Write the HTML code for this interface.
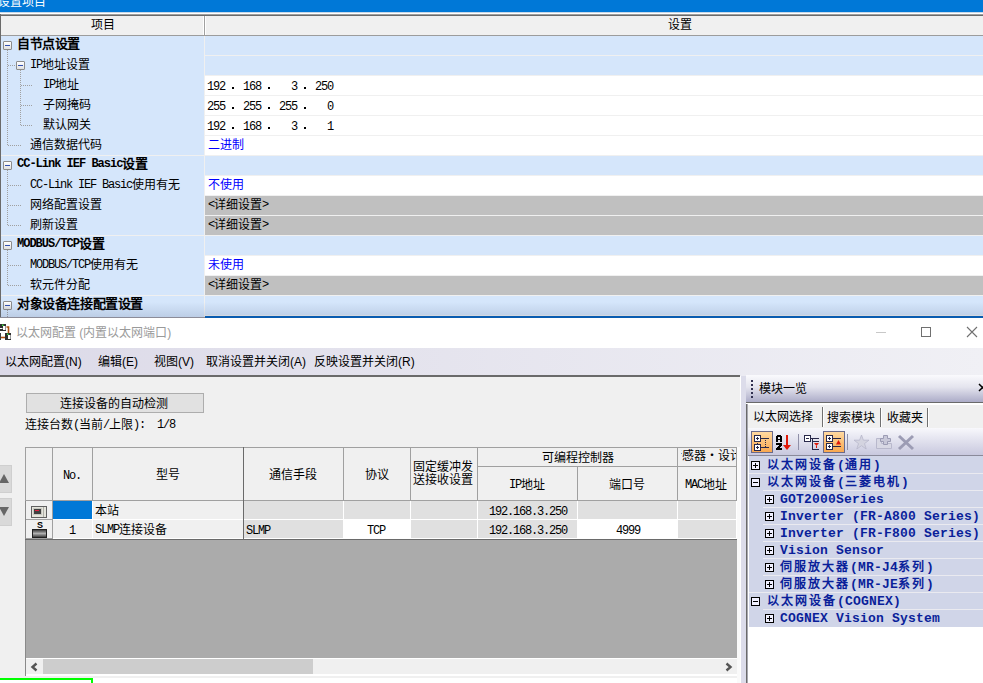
<!DOCTYPE html><html lang="zh-CN"><head><meta charset="utf-8"><style>
*{margin:0;padding:0;box-sizing:border-box}
html,body{width:983px;height:683px;overflow:hidden;background:#fff;font-family:"Liberation Sans",sans-serif;font-size:12px;color:#000}
.ab{position:absolute}
.t{position:absolute;white-space:pre;line-height:14px}
.m{font-family:"Liberation Mono",monospace;font-size:12px;letter-spacing:-1.2px}
.mb2{font-family:"Liberation Mono",monospace;font-size:12px;letter-spacing:-1.0px;position:relative;top:-1px}
.mt{font-family:"Liberation Mono",monospace;font-size:13px;letter-spacing:0.2px}
.b{font-weight:bold}
.c{font-size:12px;position:relative;top:1px}
.cb{font-size:13px;letter-spacing:-0.4px;font-weight:900}
.ct{font-size:12px;letter-spacing:2px;font-weight:900}
.dotv{position:absolute;width:1px;background:repeating-linear-gradient(to bottom,#a0a0a0 0 1px,transparent 1px 2px)}
.doth{position:absolute;height:1px;background:repeating-linear-gradient(to right,#a0a0a0 0 1px,transparent 1px 2px)}
.mb{position:absolute;width:9px;height:9px;border:1px solid #8c8c8c;border-radius:1px;background:linear-gradient(#fff,#e0e0e0)}
.mb:after{content:"";position:absolute;left:1px;top:3px;width:5px;height:1px;background:#3050b0}
</style></head><body>
<div class="ab" style="left:0;top:0;width:983px;height:12px;background:#0078d7"></div>
<div class="t" style="left:-2px;top:-5px;color:#fff;font-size:12px">设置项目</div>
<div class="ab" style="left:0;top:12px;width:983px;height:1px;background:#c8d8e8"></div>
<div class="ab" style="left:0;top:13px;width:983px;height:1px;background:#ffffff"></div>
<div class="ab" style="left:0;top:14px;width:983px;height:1px;background:#a0a0a0"></div>
<div class="ab" style="left:0;top:15px;width:983px;height:1px;background:#6a6a6a"></div>
<div class="ab" style="left:0;top:16px;width:983px;height:20px;background:#f0f0f0;border-bottom:1px solid #9c9c9c"></div>
<div class="ab" style="left:0;top:14px;width:1px;height:304px;background:#6a6a6a"></div>
<div class="ab" style="left:203px;top:16px;width:3px;height:19px;background:#a0a0a0;border-left:1px solid #fff;border-right:1px solid #fff"></div>
<div class="t" style="left:91px;top:17px"><span class="c">项目</span></div>
<div class="t" style="left:668px;top:17px"><span class="c">设置</span></div>
<div class="ab" style="left:1px;top:36px;width:203px;height:281px;background:#d5e6fb"></div>
<div class="ab" style="left:205px;top:36px;width:778px;height:19px;background:#d5e6fb"></div>
<div class="ab" style="left:205px;top:55px;width:778px;height:1px;background:#f0f0f0"></div>
<div class="t b" style="left:17px;top:37px"><span class="cb">自节点设置</span></div>
<div class="mb" style="left:3px;top:41px"></div>
<div class="ab" style="left:205px;top:56px;width:778px;height:19px;background:#d5e6fb"></div>
<div class="ab" style="left:205px;top:75px;width:778px;height:1px;background:#f0f0f0"></div>
<div class="t" style="left:30px;top:57px"><span class="m">IP</span><span class="c">地址设置</span></div>
<div class="mb" style="left:16px;top:61px"></div>
<div class="ab" style="left:205px;top:76px;width:778px;height:19px;background:#ffffff"></div>
<div class="ab" style="left:205px;top:95px;width:778px;height:1px;background:#f0f0f0"></div>
<div class="t" style="left:43px;top:77px"><span class="m">IP</span><span class="c">地址</span></div>
<div class="t m" style="left:195px;top:80px;width:30px;text-align:right">192</div>
<div class="ab" style="left:232px;top:87px;width:2px;height:2px;background:#000"></div>
<div class="t m" style="left:231px;top:80px;width:30px;text-align:right">168</div>
<div class="ab" style="left:268px;top:87px;width:2px;height:2px;background:#000"></div>
<div class="t m" style="left:267px;top:80px;width:30px;text-align:right">3</div>
<div class="ab" style="left:304px;top:87px;width:2px;height:2px;background:#000"></div>
<div class="t m" style="left:303px;top:80px;width:30px;text-align:right">250</div>
<div class="ab" style="left:205px;top:96px;width:778px;height:19px;background:#ffffff"></div>
<div class="ab" style="left:205px;top:115px;width:778px;height:1px;background:#f0f0f0"></div>
<div class="t" style="left:43px;top:97px"><span class="c">子网掩码</span></div>
<div class="t m" style="left:195px;top:100px;width:30px;text-align:right">255</div>
<div class="ab" style="left:232px;top:107px;width:2px;height:2px;background:#000"></div>
<div class="t m" style="left:231px;top:100px;width:30px;text-align:right">255</div>
<div class="ab" style="left:268px;top:107px;width:2px;height:2px;background:#000"></div>
<div class="t m" style="left:267px;top:100px;width:30px;text-align:right">255</div>
<div class="ab" style="left:304px;top:107px;width:2px;height:2px;background:#000"></div>
<div class="t m" style="left:303px;top:100px;width:30px;text-align:right">0</div>
<div class="ab" style="left:205px;top:116px;width:778px;height:19px;background:#ffffff"></div>
<div class="ab" style="left:205px;top:135px;width:778px;height:1px;background:#f0f0f0"></div>
<div class="t" style="left:43px;top:117px"><span class="c">默认网关</span></div>
<div class="t m" style="left:195px;top:120px;width:30px;text-align:right">192</div>
<div class="ab" style="left:232px;top:127px;width:2px;height:2px;background:#000"></div>
<div class="t m" style="left:231px;top:120px;width:30px;text-align:right">168</div>
<div class="ab" style="left:268px;top:127px;width:2px;height:2px;background:#000"></div>
<div class="t m" style="left:267px;top:120px;width:30px;text-align:right">3</div>
<div class="ab" style="left:304px;top:127px;width:2px;height:2px;background:#000"></div>
<div class="t m" style="left:303px;top:120px;width:30px;text-align:right">1</div>
<div class="ab" style="left:205px;top:136px;width:778px;height:19px;background:#ffffff"></div>
<div class="ab" style="left:205px;top:155px;width:778px;height:1px;background:#f0f0f0"></div>
<div class="t" style="left:30px;top:137px"><span class="c">通信数据代码</span></div>
<div class="t" style="left:208px;top:137px;color:#0000ff"><span class="c">二进制</span></div>
<div class="ab" style="left:205px;top:156px;width:778px;height:19px;background:#d5e6fb"></div>
<div class="ab" style="left:205px;top:175px;width:778px;height:1px;background:#f0f0f0"></div>
<div class="ab" style="left:1px;top:155px;width:203px;height:1px;background:#f0f0f0"></div>
<div class="t b" style="left:17px;top:157px"><span class="mb2 b">CC-Link IEF Basic</span><span class="cb">设置</span></div>
<div class="mb" style="left:3px;top:161px"></div>
<div class="ab" style="left:205px;top:176px;width:778px;height:19px;background:#ffffff"></div>
<div class="ab" style="left:205px;top:195px;width:778px;height:1px;background:#f0f0f0"></div>
<div class="t" style="left:30px;top:177px"><span class="m">CC-Link IEF Basic</span><span class="c">使用有无</span></div>
<div class="t" style="left:208px;top:177px;color:#0000ff"><span class="c">不使用</span></div>
<div class="ab" style="left:205px;top:196px;width:778px;height:19px;background:#c0c0c0"></div>
<div class="ab" style="left:205px;top:215px;width:778px;height:1px;background:#f0f0f0"></div>
<div class="t" style="left:30px;top:197px"><span class="c">网络配置设置</span></div>
<div class="t" style="left:208px;top:197px;color:#000"><span class="m">&lt;</span><span class="c">详细设置</span><span class="m">&gt;</span></div>
<div class="ab" style="left:205px;top:216px;width:778px;height:19px;background:#c0c0c0"></div>
<div class="ab" style="left:205px;top:235px;width:778px;height:1px;background:#f0f0f0"></div>
<div class="t" style="left:30px;top:217px"><span class="c">刷新设置</span></div>
<div class="t" style="left:208px;top:217px;color:#000"><span class="m">&lt;</span><span class="c">详细设置</span><span class="m">&gt;</span></div>
<div class="ab" style="left:205px;top:236px;width:778px;height:19px;background:#d5e6fb"></div>
<div class="ab" style="left:205px;top:255px;width:778px;height:1px;background:#f0f0f0"></div>
<div class="ab" style="left:1px;top:235px;width:203px;height:1px;background:#f0f0f0"></div>
<div class="t b" style="left:17px;top:237px"><span class="mb2 b">MODBUS/TCP</span><span class="cb">设置</span></div>
<div class="mb" style="left:3px;top:241px"></div>
<div class="ab" style="left:205px;top:256px;width:778px;height:19px;background:#ffffff"></div>
<div class="ab" style="left:205px;top:275px;width:778px;height:1px;background:#f0f0f0"></div>
<div class="t" style="left:30px;top:257px"><span class="m">MODBUS/TCP</span><span class="c">使用有无</span></div>
<div class="t" style="left:208px;top:257px;color:#0000ff"><span class="c">未使用</span></div>
<div class="ab" style="left:205px;top:276px;width:778px;height:19px;background:#c0c0c0"></div>
<div class="ab" style="left:205px;top:295px;width:778px;height:1px;background:#f0f0f0"></div>
<div class="t" style="left:30px;top:277px"><span class="c">软元件分配</span></div>
<div class="t" style="left:208px;top:277px;color:#000"><span class="m">&lt;</span><span class="c">详细设置</span><span class="m">&gt;</span></div>
<div class="ab" style="left:205px;top:296px;width:778px;height:19px;background:#d5e6fb"></div>
<div class="ab" style="left:205px;top:315px;width:778px;height:1px;background:#f0f0f0"></div>
<div class="ab" style="left:1px;top:295px;width:203px;height:1px;background:#f0f0f0"></div>
<div class="t b" style="left:17px;top:297px"><span class="cb">对象设备连接配置设置</span></div>
<div class="mb" style="left:3px;top:301px"></div>
<div class="ab" style="left:204px;top:36px;width:1px;height:281px;background:#f0f0f0"></div>
<div class="dotv" style="left:7px;top:50px;height:96px"></div>
<div class="doth" style="left:8px;top:65px;width:8px"></div>
<div class="doth" style="left:8px;top:145px;width:13px"></div>
<div class="dotv" style="left:20px;top:70px;height:56px"></div>
<div class="doth" style="left:21px;top:85px;width:12px"></div>
<div class="doth" style="left:21px;top:105px;width:12px"></div>
<div class="doth" style="left:21px;top:125px;width:12px"></div>
<div class="dotv" style="left:7px;top:170px;height:56px"></div>
<div class="doth" style="left:8px;top:185px;width:13px"></div>
<div class="doth" style="left:8px;top:205px;width:13px"></div>
<div class="doth" style="left:8px;top:225px;width:13px"></div>
<div class="dotv" style="left:7px;top:250px;height:36px"></div>
<div class="doth" style="left:8px;top:265px;width:13px"></div>
<div class="doth" style="left:8px;top:285px;width:13px"></div>
<div class="dotv" style="left:7px;top:310px;height:8px"></div>
<div class="ab" style="left:0;top:302px;width:983px;height:15px;background:linear-gradient(rgba(60,80,120,0),rgba(60,80,120,0.16))"></div>
<div class="ab" style="left:0;top:317px;width:205px;height:1px;background:#8c8c98"></div>
<div class="ab" style="left:205px;top:316px;width:778px;height:2px;background:#0a5cb0"></div>
<div class="ab" style="left:0;top:318px;width:983px;height:30px;background:#fff"></div>
<div class="t" style="left:16px;top:326px;color:#9a9a9a;font-size:12px">以太网配置 (内置以太网端口)</div>
<svg class="ab" style="left:0;top:323px" width="12" height="18" viewBox="0 0 12 18">
<path d="M6.5 4H8.5V11" stroke="#b05010" stroke-width="1.6" fill="none"/>
<path d="M1 14.5H5.5" stroke="#b05010" stroke-width="1.6" fill="none"/>
<rect x="0" y="1" width="6" height="7" fill="#303030"/><rect x="3" y="3" width="2.5" height="4" fill="#fff"/><rect x="0" y="5" width="2.5" height="1" fill="#fff"/><rect x="2" y="1.5" width="1.5" height="1.5" fill="#40e040"/>
<rect x="5" y="10" width="6" height="7" fill="#303030"/><rect x="8" y="12" width="2.5" height="4" fill="#fff"/><rect x="7" y="10.5" width="1.5" height="1.5" fill="#40e040"/>
<rect x="0" y="10" width="1" height="7" fill="#404040"/>
</svg>
<div class="ab" style="left:876px;top:332px;width:10px;height:1px;background:#c8c8c8"></div>
<div class="ab" style="left:921px;top:327px;width:10px;height:10px;border:1px solid #707070"></div>
<svg class="ab" style="left:966px;top:326px" width="12" height="12"><path d="M1 1L11 11M11 1L1 11" stroke="#707070" stroke-width="1.1"/></svg>
<div class="ab" style="left:0;top:348px;width:983px;height:28px;background:linear-gradient(to right,#dcdae8,#f0f0f5)"></div>
<div class="t" style="left:5px;top:355px;font-size:12px">以太网配置(N)</div>
<div class="t" style="left:98px;top:355px;font-size:12px">编辑(E)</div>
<div class="t" style="left:154px;top:355px;font-size:12px">视图(V)</div>
<div class="t" style="left:206px;top:355px;font-size:12px">取消设置并关闭(A)</div>
<div class="t" style="left:314px;top:355px;font-size:12px">反映设置并关闭(R)</div>
<div class="ab" style="left:0;top:375px;width:740px;height:2px;background:#6a6a6a"></div>
<div class="ab" style="left:0;top:377px;width:740px;height:306px;background:#f0f0f0"></div>
<div class="ab" style="left:26px;top:393px;width:178px;height:20px;background:#e1e1e1;border:1px solid #adadad"></div>
<div class="t" style="left:60px;top:396px"><span class="c">连接设备的自动检测</span></div>
<div class="t" style="left:25px;top:417px"><span class="c">连接台数</span><span class="m">(</span><span class="c">当前</span><span class="m">/</span><span class="c">上限</span><span class="m">):  1/8</span></div>
<div class="ab" style="left:0;top:465px;width:12px;height:28px;background:#d9d9d9;border:1px solid #cfcfcf;border-left:none"></div>
<div class="ab" style="left:0;top:498px;width:12px;height:28px;background:#d9d9d9;border:1px solid #cfcfcf;border-left:none"></div>
<svg class="ab" style="left:0;top:471px" width="12" height="14"><path d="M-1 12L4 3L9 12Z" fill="#666"/></svg>
<svg class="ab" style="left:0;top:504px" width="12" height="14"><path d="M-1 3L9 3L4 12Z" fill="#666"/></svg>
<div class="ab" style="left:25px;top:447px;width:712px;height:211px;background:#ababab;border-left:1px solid #8a8a8a"></div>
<div class="ab" style="left:25px;top:447px;width:712px;height:54px;background:#f0f0f0;border:1px solid #a0a0a0;border-right:none"></div>
<div class="ab" style="left:52px;top:447px;width:1px;height:53px;background:#a0a0a0"></div>
<div class="ab" style="left:92px;top:447px;width:1px;height:53px;background:#a0a0a0"></div>
<div class="ab" style="left:343px;top:447px;width:1px;height:53px;background:#a0a0a0"></div>
<div class="ab" style="left:410px;top:447px;width:1px;height:53px;background:#a0a0a0"></div>
<div class="ab" style="left:477px;top:447px;width:1px;height:53px;background:#a0a0a0"></div>
<div class="ab" style="left:677px;top:447px;width:1px;height:53px;background:#a0a0a0"></div>
<div class="ab" style="left:736px;top:447px;width:1px;height:53px;background:#a0a0a0"></div>
<div class="ab" style="left:577px;top:466px;width:1px;height:34px;background:#a0a0a0"></div>
<div class="ab" style="left:477px;top:466px;width:260px;height:1px;background:#a0a0a0"></div>
<div class="ab" style="left:25px;top:500px;width:712px;height:1px;background:#a0a0a0"></div>
<div class="ab" style="left:26px;top:501px;width:711px;height:38px;background:#fff"></div>
<div class="ab" style="left:26px;top:501px;width:26px;height:18px;background:#f0f0f0"></div>
<div class="ab" style="left:26px;top:520px;width:26px;height:18px;background:#f0f0f0"></div>
<div class="ab" style="left:26px;top:519px;width:27px;height:1px;background:#a0a0a0"></div>
<div class="ab" style="left:26px;top:538px;width:27px;height:1px;background:#a0a0a0"></div>
<div class="ab" style="left:52px;top:501px;width:1px;height:38px;background:#a0a0a0"></div>
<div class="ab" style="left:53px;top:501px;width:39px;height:18px;background:#0078d7"></div>
<div class="ab" style="left:93px;top:501px;width:150px;height:18px;background:#f0f0f0"></div>
<div class="ab" style="left:244px;top:501px;width:99px;height:18px;background:#e0e0e0"></div>
<div class="ab" style="left:344px;top:501px;width:66px;height:18px;background:#e0e0e0"></div>
<div class="ab" style="left:411px;top:501px;width:66px;height:18px;background:#e0e0e0"></div>
<div class="ab" style="left:478px;top:501px;width:99px;height:18px;background:#e0e0e0"></div>
<div class="ab" style="left:578px;top:501px;width:99px;height:18px;background:#e0e0e0"></div>
<div class="ab" style="left:678px;top:501px;width:58px;height:18px;background:#e0e0e0"></div>
<div class="ab" style="left:53px;top:520px;width:39px;height:18px;background:#f0f0f0"></div>
<div class="ab" style="left:93px;top:520px;width:150px;height:18px;background:#f0f0f0"></div>
<div class="ab" style="left:244px;top:520px;width:99px;height:18px;background:#e0e0e0"></div>
<div class="ab" style="left:344px;top:520px;width:66px;height:18px;background:#ffffff"></div>
<div class="ab" style="left:411px;top:520px;width:66px;height:18px;background:#e0e0e0"></div>
<div class="ab" style="left:478px;top:520px;width:99px;height:18px;background:#e0e0e0"></div>
<div class="ab" style="left:578px;top:520px;width:99px;height:18px;background:#ffffff"></div>
<div class="ab" style="left:678px;top:520px;width:58px;height:18px;background:#e0e0e0"></div>
<div class="ab" style="left:243px;top:447px;width:1px;height:92px;background:#6a6a6a"></div>
<div class="ab" style="left:25px;top:539px;width:712px;height:1px;background:#6a6a6a"></div>
<div class="t m" style="left:63px;top:469px">No.</div>
<div class="t" style="left:156px;top:467px"><span class="c">型号</span></div>
<div class="t" style="left:269px;top:467px"><span class="c">通信手段</span></div>
<div class="t" style="left:365px;top:467px"><span class="c">协议</span></div>
<div class="t" style="left:413px;top:460px;line-height:13px"><span class="c">固定缓冲发</span><br><span class="c">送接收设置</span></div>
<div class="t" style="left:542px;top:450px"><span class="c">可编程控制器</span></div>
<div class="ab" style="left:681px;top:447px;width:55px;height:19px;overflow:hidden"><div class="t" style="left:-11px;top:1px"><span class="c">传感器・设计</span></div></div>
<div class="t" style="left:509px;top:477px"><span class="m">IP</span><span class="c">地址</span></div>
<div class="t" style="left:609px;top:477px"><span class="c">端口号</span></div>
<div class="t" style="left:685px;top:477px"><span class="m">MAC</span><span class="c">地址</span></div>
<div class="t" style="left:95px;top:503px"><span class="c">本站</span></div>
<div class="t m" style="left:489px;top:505px">192.168.3.250</div>
<div class="t m" style="left:69px;top:524px">1</div>
<div class="t" style="left:95px;top:522px"><span class="m">SLMP</span><span class="c">连接设备</span></div>
<div class="t m" style="left:246px;top:524px">SLMP</div>
<div class="t m" style="left:367px;top:524px">TCP</div>
<div class="t m" style="left:489px;top:524px">192.168.3.250</div>
<div class="t m" style="left:616px;top:524px">4999</div>
<div class="ab" style="left:31px;top:506px;width:16px;height:12px;background:#e4e4dc;border:1px solid #606060"></div>
<div class="ab" style="left:33px;top:508px;width:9px;height:7px;background:#404040;border:1px solid #c8c8c0"></div>
<div class="ab" style="left:35px;top:510px;width:4px;height:1px;background:#e02040"></div>
<div class="ab" style="left:43px;top:507px;width:1px;height:10px;background:#b0b0a8"></div>
<div class="t b" style="left:37px;top:521px;font-size:9px;line-height:9px">S</div>
<div class="ab" style="left:32px;top:529px;width:15px;height:9px;background:linear-gradient(#404040,#b0b0b0 50%,#404040);border:1px solid #202020"></div>
<div class="ab" style="left:26px;top:658px;width:711px;height:18px;background:#fff"></div>
<div class="ab" style="left:26px;top:659px;width:711px;height:15px;background:#f0f0f0"></div>
<div class="ab" style="left:43px;top:659px;width:270px;height:15px;background:#cdcdcd"></div>
<svg class="ab" style="left:29px;top:661px" width="10" height="12"><path d="M7.5 2.5L3.5 6L7.5 9.5" stroke="#555" stroke-width="2.4" fill="none"/></svg>
<svg class="ab" style="left:724px;top:661px" width="10" height="12"><path d="M2.5 2.5L6.5 6L2.5 9.5" stroke="#555" stroke-width="2.4" fill="none"/></svg>
<div class="ab" style="left:25px;top:658px;width:1px;height:18px;background:#8a8a8a"></div>
<div class="ab" style="left:0;top:676px;width:737px;height:2px;background:#f0f0f0"></div>
<div class="ab" style="left:0;top:678px;width:737px;height:5px;background:#fff"></div>
<div class="ab" style="left:0;top:678px;width:93px;height:5px;border:2px solid #00ff00;border-left:none;border-bottom:none"></div>
<div class="ab" style="left:737px;top:447px;width:4px;height:236px;background:#fafafa"></div>
<div class="ab" style="left:740px;top:376px;width:1px;height:307px;background:#fff"></div>
<div class="ab" style="left:741px;top:376px;width:5px;height:307px;background:#dcdcea"></div>
<div class="ab" style="left:746px;top:375px;width:237px;height:27px;background:linear-gradient(#fafafd,#e4e4ee 45%,#acacc8)"></div>
<div class="ab" style="left:751px;top:380px;width:2px;height:2px;background:#303050"></div>
<div class="ab" style="left:751px;top:384px;width:2px;height:2px;background:#303050"></div>
<div class="ab" style="left:751px;top:388px;width:2px;height:2px;background:#303050"></div>
<div class="ab" style="left:751px;top:392px;width:2px;height:2px;background:#303050"></div>
<div class="ab" style="left:751px;top:396px;width:2px;height:2px;background:#303050"></div>
<div class="t" style="left:759px;top:382px;font-size:12px">模块一览</div>
<svg class="ab" style="left:978px;top:383px" width="10" height="10"><path d="M1 1L8 8M8 1L1 8" stroke="#000" stroke-width="1.5"/></svg>
<div class="ab" style="left:746px;top:402px;width:237px;height:1px;background:#6a6a6a"></div>
<div class="ab" style="left:746px;top:404px;width:1px;height:279px;background:#6a6a6a"></div>
<div class="ab" style="left:747px;top:404px;width:1px;height:279px;background:#a8a8b0"></div>
<div class="ab" style="left:748px;top:404px;width:235px;height:279px;background:#fff"></div>
<div class="ab" style="left:748px;top:405px;width:235px;height:23px;background:#f0f0f0"></div>
<div class="t" style="left:753px;top:410px;font-size:12px">以太网选择</div>
<div class="ab" style="left:822px;top:407px;width:2px;height:20px;background:#707070;border-right:1px solid #fff"></div>
<div class="t" style="left:827px;top:411px;font-size:12px">搜索模块</div>
<div class="ab" style="left:880px;top:408px;width:2px;height:19px;background:#707070;border-right:1px solid #fff"></div>
<div class="t" style="left:887px;top:411px;font-size:12px">收藏夹</div>
<div class="ab" style="left:927px;top:408px;width:2px;height:19px;background:#707070;border-right:1px solid #fff"></div>
<div class="ab" style="left:748px;top:428px;width:235px;height:27px;background:linear-gradient(#f8f8fc,#c8c8de)"></div>
<div class="ab" style="left:751px;top:431px;width:22px;height:22px;background:linear-gradient(#ffd9a0,#f8a850);border:1px solid #6a6a8a"></div>
<div class="ab" style="left:823px;top:431px;width:22px;height:22px;background:linear-gradient(#ffd9a0,#f8a850);border:1px solid #6a6a8a"></div>
<div class="ab" style="left:798px;top:434px;width:1px;height:16px;background:#9090a8"></div>
<div class="ab" style="left:847px;top:434px;width:1px;height:16px;background:#9090a8"></div>
<svg class="ab" style="left:751px;top:431px" width="200" height="22" viewBox="0 0 200 22" shape-rendering="crispEdges">
<g stroke="#28284a" stroke-width="1" fill="#fff">
<rect x="3.5" y="4.5" width="6" height="6"/><rect x="3.5" y="13.5" width="6" height="6"/>
<rect x="53.5" y="4.5" width="6" height="6"/>
<rect x="75.5" y="4.5" width="6" height="6"/><rect x="75.5" y="12.5" width="6" height="6"/>
</g>
<g stroke="#28284a" stroke-width="1" fill="none">
<path d="M10 7.5H18M10 16.5H18M5 7.5H8M6.5 6V9M5 16.5H8M6.5 15V18"/>
<path d="M14.5 9V10M14.5 11V12M14.5 13V14M14.5 15V16M6.5 12V13"/>
<path d="M55 7.5H58M60 7.5H68M61.5 7.5V18.5H68M61.5 10.5H68"/>
<path d="M82 7.5H90M82 15.5H90M77 7.5H80M78.5 6V9M77 15.5H80M78.5 14V17"/>
</g>
<g fill="#000" shape-rendering="crispEdges">
<path d="M26 4H30V5H31V11H29V9H27V11H25V5H26ZM27 6V8H29V6Z"/>
<path d="M25 12H31V14L28 17H31V19H25V17L28 14H25Z"/>
</g>
<path d="M35 4H37V15H35Z" fill="#e01808"/><path d="M32 14H40L36 19Z" fill="#e01808" shape-rendering="auto"/>
<path d="M63 12H68L65.5 15Z" fill="#e01808" shape-rendering="auto"/><rect x="65" y="15" width="1" height="2" fill="#e01808"/>
<path d="M85 13.5H90L87.5 9Z" fill="#e01808" shape-rendering="auto"/>
<g shape-rendering="auto">
<path d="M110.5 4L112.4 9.2H118L113.5 12.6L115.2 18L110.5 14.7L105.8 18L107.5 12.6L103 9.2H108.6Z" fill="#d4d4e0" stroke="#b8b8cc" stroke-width="0.8"/>
<path d="M125.5 7.5H130.5V12.5H140.5V17.5H125.5Z" fill="#d8d8e4" stroke="#b8b8cc"/>
<path d="M132.5 4.5H136.5V7.5H139.5V10.5H136.5V13.5H132.5V10.5H129.5V7.5H132.5Z" fill="#c8c8d8" stroke="#9c9cb4"/>
<path d="M148 5L162 18M162 5L148 18" stroke="#9c9cb4" stroke-width="3"/>
</g>
</svg>
<div class="ab" style="left:748px;top:455px;width:235px;height:1px;background:#8a8a9a"></div>
<div class="ab" style="left:749px;top:456px;width:234px;height:171px;background:#d0d5e8"></div>
<div class="ab" style="left:751px;top:461px;width:9px;height:9px;border:1px solid #000;background:#f0f0ff"></div>
<div class="ab" style="left:753px;top:465px;width:5px;height:1px;background:#000"></div>
<div class="ab" style="left:755px;top:463px;width:1px;height:5px;background:#000"></div>
<div class="t b" style="left:767px;top:458px;color:#0a1f9a;font-size:13px"><span class="ct">以太网设备</span><span class="mt b">(</span><span class="ct">通用</span><span class="mt b">)</span></div>
<div class="ab" style="left:749px;top:473px;width:234px;height:1px;background:#eaeaf0"></div>
<div class="ab" style="left:751px;top:478px;width:9px;height:9px;border:1px solid #000;background:#f0f0ff"></div>
<div class="ab" style="left:753px;top:482px;width:5px;height:1px;background:#000"></div>
<div class="t b" style="left:767px;top:475px;color:#0a1f9a;font-size:13px"><span class="ct">以太网设备</span><span class="mt b">(</span><span class="ct">三菱电机</span><span class="mt b">)</span></div>
<div class="ab" style="left:763px;top:490px;width:220px;height:1px;background:#eaeaf0"></div>
<div class="ab" style="left:765px;top:495px;width:9px;height:9px;border:1px solid #000;background:#f0f0ff"></div>
<div class="ab" style="left:767px;top:499px;width:5px;height:1px;background:#000"></div>
<div class="ab" style="left:769px;top:497px;width:1px;height:5px;background:#000"></div>
<div class="t b" style="left:780px;top:492px;color:#0a1f9a;font-size:13px"><span class="mt b">GOT2000Series</span></div>
<div class="ab" style="left:763px;top:507px;width:220px;height:1px;background:#eaeaf0"></div>
<div class="ab" style="left:765px;top:512px;width:9px;height:9px;border:1px solid #000;background:#f0f0ff"></div>
<div class="ab" style="left:767px;top:516px;width:5px;height:1px;background:#000"></div>
<div class="ab" style="left:769px;top:514px;width:1px;height:5px;background:#000"></div>
<div class="t b" style="left:780px;top:509px;color:#0a1f9a;font-size:13px"><span class="mt b">Inverter (FR-A800 Series)</span></div>
<div class="ab" style="left:763px;top:524px;width:220px;height:1px;background:#eaeaf0"></div>
<div class="ab" style="left:765px;top:529px;width:9px;height:9px;border:1px solid #000;background:#f0f0ff"></div>
<div class="ab" style="left:767px;top:533px;width:5px;height:1px;background:#000"></div>
<div class="ab" style="left:769px;top:531px;width:1px;height:5px;background:#000"></div>
<div class="t b" style="left:780px;top:526px;color:#0a1f9a;font-size:13px"><span class="mt b">Inverter (FR-F800 Series)</span></div>
<div class="ab" style="left:763px;top:541px;width:220px;height:1px;background:#eaeaf0"></div>
<div class="ab" style="left:765px;top:546px;width:9px;height:9px;border:1px solid #000;background:#f0f0ff"></div>
<div class="ab" style="left:767px;top:550px;width:5px;height:1px;background:#000"></div>
<div class="ab" style="left:769px;top:548px;width:1px;height:5px;background:#000"></div>
<div class="t b" style="left:780px;top:543px;color:#0a1f9a;font-size:13px"><span class="mt b">Vision Sensor</span></div>
<div class="ab" style="left:763px;top:558px;width:220px;height:1px;background:#eaeaf0"></div>
<div class="ab" style="left:765px;top:563px;width:9px;height:9px;border:1px solid #000;background:#f0f0ff"></div>
<div class="ab" style="left:767px;top:567px;width:5px;height:1px;background:#000"></div>
<div class="ab" style="left:769px;top:565px;width:1px;height:5px;background:#000"></div>
<div class="t b" style="left:780px;top:560px;color:#0a1f9a;font-size:13px"><span class="ct">伺服放大器</span><span class="mt b">(MR-J4</span><span class="ct">系列</span><span class="mt b">)</span></div>
<div class="ab" style="left:763px;top:575px;width:220px;height:1px;background:#eaeaf0"></div>
<div class="ab" style="left:765px;top:580px;width:9px;height:9px;border:1px solid #000;background:#f0f0ff"></div>
<div class="ab" style="left:767px;top:584px;width:5px;height:1px;background:#000"></div>
<div class="ab" style="left:769px;top:582px;width:1px;height:5px;background:#000"></div>
<div class="t b" style="left:780px;top:577px;color:#0a1f9a;font-size:13px"><span class="ct">伺服放大器</span><span class="mt b">(MR-JE</span><span class="ct">系列</span><span class="mt b">)</span></div>
<div class="ab" style="left:749px;top:592px;width:234px;height:1px;background:#eaeaf0"></div>
<div class="ab" style="left:751px;top:597px;width:9px;height:9px;border:1px solid #000;background:#f0f0ff"></div>
<div class="ab" style="left:753px;top:601px;width:5px;height:1px;background:#000"></div>
<div class="t b" style="left:767px;top:594px;color:#0a1f9a;font-size:13px"><span class="ct">以太网设备</span><span class="mt b">(COGNEX)</span></div>
<div class="ab" style="left:763px;top:609px;width:220px;height:1px;background:#eaeaf0"></div>
<div class="ab" style="left:765px;top:614px;width:9px;height:9px;border:1px solid #000;background:#f0f0ff"></div>
<div class="ab" style="left:767px;top:618px;width:5px;height:1px;background:#000"></div>
<div class="ab" style="left:769px;top:616px;width:1px;height:5px;background:#000"></div>
<div class="t b" style="left:780px;top:611px;color:#0a1f9a;font-size:13px"><span class="mt b">COGNEX Vision System</span></div>
</body></html>
